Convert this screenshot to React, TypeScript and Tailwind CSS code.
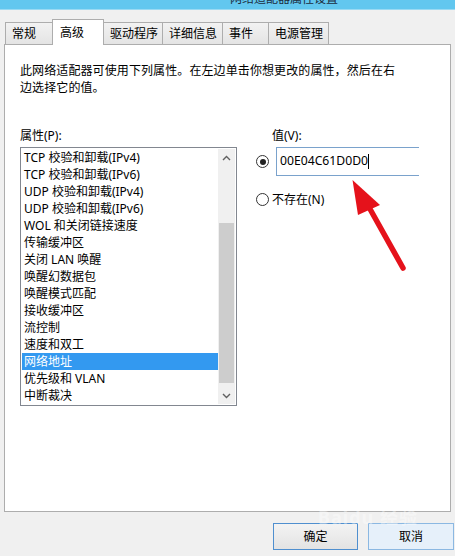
import React from 'react'

const tabs = [
  { label: '常规', w: 'w-[48px]' },
  { label: '高级', w: 'w-[52px]', active: true },
  { label: '驱动程序', w: 'w-[60px]' },
  { label: '详细信息', w: 'w-[61px]' },
  { label: '事件', w: 'w-[47px]' },
  { label: '电源管理', w: 'w-[61px]' },
]

const properties = [
  'TCP 校验和卸载(IPv4)',
  'TCP 校验和卸载(IPv6)',
  'UDP 校验和卸载(IPv4)',
  'UDP 校验和卸载(IPv6)',
  'WOL 和关闭链接速度',
  '传输缓冲区',
  '关闭 LAN 唤醒',
  '唤醒幻数据包',
  '唤醒模式匹配',
  '接收缓冲区',
  '流控制',
  '速度和双工',
  '网络地址',
  '优先级和 VLAN',
  '中断裁决',
]

function Radio({ checked }: { checked?: boolean }) {
  return (
    <div className="w-[13px] h-[13px] rounded-full border border-[#333] bg-white flex items-center justify-center shrink-0">
      {checked && <div className="w-[6px] h-[6px] rounded-full bg-[#222]" />}
    </div>
  )
}

export default function App() {
  return (
    <div className="relative w-[455px] h-[556px] overflow-hidden bg-[#f0f0f0] text-[12px] text-black font-['Noto_Sans','Noto_Sans_CJK_SC',sans-serif]">
      {/* Title bar (cropped at the top of the shot) */}
      <div className="h-[10px] bg-[#62c7ef] border-b border-[#9adaf3] overflow-hidden flex">
        <div className="ml-[230px] -mt-[8px] text-[12px] leading-[14px] text-[#1b2c40] whitespace-nowrap">
          网络适配器属性设置
        </div>
      </div>

      {/* Tabs */}
      <div className="relative z-10 flex items-end h-[34px] pl-[5px]">
        {tabs.map((t, i) =>
          t.active ? (
            <div
              key={t.label}
              className={`${t.w} h-[26px] -mb-px ${i > 0 ? '-ml-px' : ''} bg-white border border-b-0 border-[#adadad] flex items-center pl-[7px] leading-[17px]`}
            >
              {t.label}
            </div>
          ) : (
            <div
              key={t.label}
              className={`${t.w} h-[22px] ${i > 0 ? '-ml-px' : ''} bg-[linear-gradient(#f2f2f2,#e4e4e4)] border border-b-0 border-[#adadad] flex items-center pl-[6px] leading-[17px]`}
            >
              {t.label}
            </div>
          )
        )}
      </div>

      {/* Panel */}
      <div className="ml-[4px] w-[447px] h-[468px] bg-white border border-[#adadad] px-[15px] pt-[17px]">
        <p className="leading-[17px] whitespace-nowrap tracking-[0.1px]">
          此网络适配器可使用下列属性。在左边单击你想更改的属性，然后在右
          <br />
          边选择它的值。
        </p>

        <div className="flex mt-[31px]">
          {/* Left column */}
          <div className="w-[217px]">
            <div className="leading-[17px]">属性(P):</div>
            <div className="mt-[3px] h-[259px] border border-[#828790] flex p-px">
              <div className="flex-1 flex flex-col">
                {properties.map((p) => (
                  <div
                    key={p}
                    className={`h-[17px] leading-[17px] pl-[2px] whitespace-nowrap ${
                      p === '网络地址' ? 'bg-[#3399f0] text-white' : ''
                    }`}
                  >
                    {p}
                  </div>
                ))}
              </div>
              <div className="w-[17px] flex flex-col bg-[#f0f0f0]">
                <div className="h-[17px] flex items-center justify-center">
                  <svg width="9" height="6" viewBox="0 0 9 6">
                    <path d="M1 5 L4.5 1.5 L8 5" fill="none" stroke="#606060" strokeWidth="1.4" />
                  </svg>
                </div>
                <div className="h-[57px]" />
                <div className="mx-[1px] h-[160px] bg-[#cdcdcd]" />
                <div className="flex-1" />
                <div className="h-[17px] flex items-center justify-center">
                  <svg width="9" height="6" viewBox="0 0 9 6">
                    <path d="M1 1 L4.5 4.5 L8 1" fill="none" stroke="#606060" strokeWidth="1.4" />
                  </svg>
                </div>
              </div>
            </div>
          </div>

          {/* Right column */}
          <div className="ml-[19px] flex-1">
            <div className="leading-[17px] pl-[16px]">值(V):</div>
            <div className="mt-[3px] flex items-center">
              <Radio checked />
              <div className="ml-[7px] w-[143px] h-[29px] border border-r-0 border-[#7aa2cc] flex items-center pl-[3px] text-[12.2px]">
                <span>00E04C61D0D0</span>
                <span className="w-px h-[15px] bg-black" />
              </div>
            </div>
            <div className="mt-[15px] flex items-center leading-[17px]">
              <Radio />
              <span className="ml-[3px]">不存在(N)</span>
            </div>
          </div>
        </div>
      </div>

      {/* Footer buttons */}
      <div className="flex pl-[273px] pt-[11px] gap-[10px]">
        <button className="w-[85px] h-[27px] border border-[#4f8fcf] bg-[linear-gradient(#f3f3f3,#e3e3e3)] text-[12px]">
          确定
        </button>
        <button className="w-[86px] h-[27px] border border-[#8bb8e2] bg-[#e6f0fa] text-[12px]">
          取消
        </button>
      </div>

      {/* Annotation arrow */}
      <svg className="absolute left-0 top-0 pointer-events-none" width="455" height="556">
        <line x1="370" y1="209" x2="403" y2="268" stroke="#e5121b" strokeWidth="5.5" strokeLinecap="round" />
        <polygon points="352.5,180 358,215 380,205" fill="#e5121b" />
      </svg>

      {/* Watermark */}
      <div className="absolute left-[318px] top-[506px] text-[18px] font-bold text-white/40 tracking-[1px] leading-[22px] pointer-events-none">
        Baidu 经验
      </div>
    </div>
  )
}
